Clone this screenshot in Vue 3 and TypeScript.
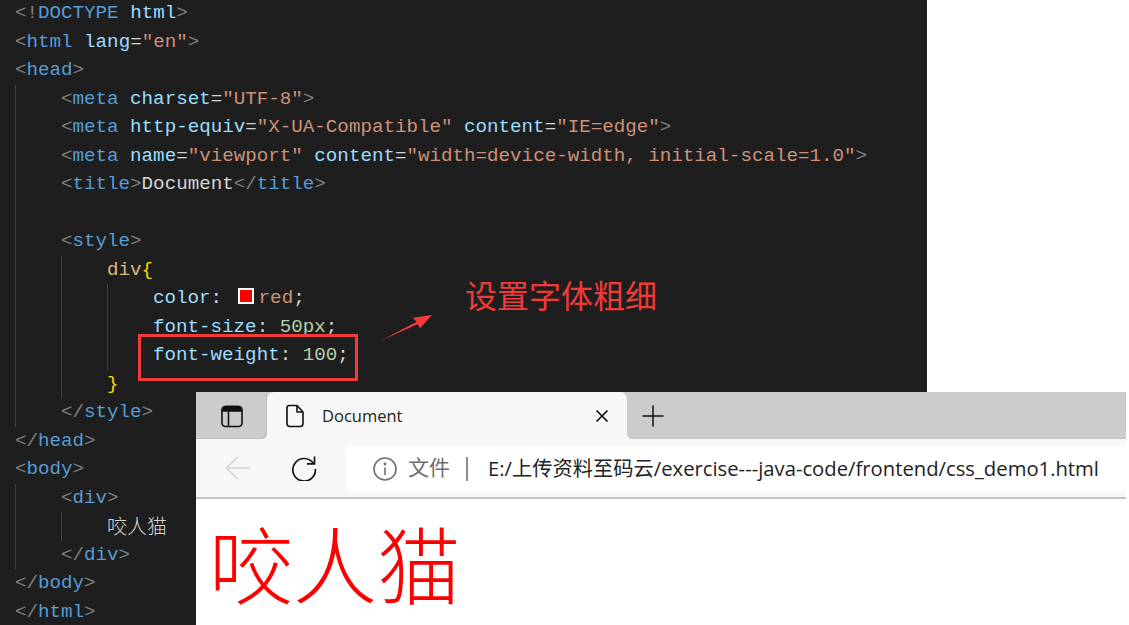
<script setup lang="ts">
const pageText: string = '咬人猫'
</script>

<template>
  <div class="shot">
    <div class="editor">
      <div class="line first"><i>&lt;!</i><b>DOCTYPE</b> <u>html</u><i>&gt;</i></div>
      <div class="line"><i>&lt;</i><b>html</b> <u>lang</u><em>=</em><s>"en"</s><i>&gt;</i></div>
      <div class="line"><i>&lt;</i><b>head</b><i>&gt;</i></div>
      <div class="block">
        <div class="line"><i>&lt;</i><b>meta</b> <u>charset</u><em>=</em><s>"UTF-8"</s><i>&gt;</i></div>
        <div class="line"><i>&lt;</i><b>meta</b> <u>http-equiv</u><em>=</em><s>"X-UA-Compatible"</s> <u>content</u><em>=</em><s>"IE=edge"</s><i>&gt;</i></div>
        <div class="line"><i>&lt;</i><b>meta</b> <u>name</u><em>=</em><s>"viewport"</s> <u>content</u><em>=</em><s>"width=device-width, initial-scale=1.0"</s><i>&gt;</i></div>
        <div class="line"><i>&lt;</i><b>title</b><i>&gt;</i><em>Document</em><i>&lt;/</i><b>title</b><i>&gt;</i></div>
        <div class="line">&nbsp;</div>
        <div class="line"><i>&lt;</i><b>style</b><i>&gt;</i></div>
        <div class="block">
          <div class="line"><span class="sel">div</span><span class="brace">{</span></div>
          <div class="block">
            <div class="line"><u>color</u><em>:</em> <span class="swatch"></span><s>red</s><em>;</em></div>
            <div class="line"><u>font-size</u><em>:</em> <span class="num">50px</span><em>;</em></div>
            <div class="line"><u>font-weight</u><em>:</em> <span class="num">100</span><em>;</em></div>
          </div>
          <div class="line"><span class="brace">}</span></div>
        </div>
        <div class="line"><i>&lt;/</i><b>style</b><i>&gt;</i></div>
      </div>
      <div class="line"><i>&lt;/</i><b>head</b><i>&gt;</i></div>
      <div class="line"><i>&lt;</i><b>body</b><i>&gt;</i></div>
      <div class="block">
        <div class="line"><i>&lt;</i><b>div</b><i>&gt;</i></div>
        <div class="block">
          <div class="line cn">咬人猫</div>
        </div>
        <div class="line"><i>&lt;/</i><b>div</b><i>&gt;</i></div>
      </div>
      <div class="line"><i>&lt;/</i><b>body</b><i>&gt;</i></div>
      <div class="line"><i>&lt;/</i><b>html</b><i>&gt;</i></div>
    </div>

    <div class="redbox"></div>
    <svg class="arrow" width="56" height="30" viewBox="0 0 56 30">
      <path d="M0.7 28.7 L36.7 9.7 L32.7 5.7 L52 3 L40 16.3 L37.5 12.3 Z" fill="#f23a3a" />
    </svg>
    <div class="note">设置字体粗细</div>

    <div class="browser">
      <div class="tabstrip">
        <div class="tabside">
          <svg width="24" height="24" viewBox="0 0 24 24" fill="none" stroke="#111" stroke-width="1.6">
            <rect x="2" y="2.5" width="20" height="20" rx="3.5" />
            <path d="M2.5 7 V5.5 a3 3 0 0 1 3-3 h13 a3 3 0 0 1 3 3 V7 Z" fill="#111" />
            <path d="M8.5 7 V22" />
          </svg>
        </div>
        <div class="tab">
          <svg class="docicon" width="20" height="24" viewBox="0 0 20 24" fill="none" stroke="#111" stroke-width="1.6" stroke-linejoin="round">
            <path d="M4 1.5 H12 L18 8 V19.5 a3 3 0 0 1-3 3 H5 a3 3 0 0 1-3-3 V4 a2.5 2.5 0 0 1 2-2.5 Z" />
            <path d="M12 1.5 V8 H18" />
          </svg>
          <span class="tabtitle">Document</span>
          <svg class="close" width="14" height="14" viewBox="0 0 14 14" stroke="#111" stroke-width="1.7">
            <path d="M1.5 1.5 L12.5 12.5 M12.5 1.5 L1.5 12.5" />
          </svg>
        </div>
        <div class="newtab">
          <svg width="22" height="22" viewBox="0 0 22 22" stroke="#111" stroke-width="1.5">
            <path d="M11 0.5 V21.5 M0.5 11 H21.5" />
          </svg>
        </div>
      </div>
      <div class="toolbar">
        <svg class="back" width="26" height="24" viewBox="0 0 26 24" fill="none" stroke="#d5d5d5" stroke-width="1.6">
          <path d="M1.5 12 H25.5 M12.5 1 L1.5 12 L12.5 23" />
        </svg>
        <svg class="reload" width="26" height="26" viewBox="0 0 26 26" fill="none" stroke="#111" stroke-width="1.7">
          <path d="M22.5 8.5 A11.3 11.3 0 1 0 24.4 14" />
          <path d="M23.5 1.5 V8.8 H16" />
        </svg>
        <div class="address">
          <svg width="24" height="24" viewBox="0 0 24 24" fill="none" stroke="#6e6e6e" stroke-width="1.6">
            <circle cx="12" cy="12" r="11" />
            <path d="M12 10.5 V18" />
            <circle cx="12" cy="7" r="0.6" fill="#6e6e6e" />
          </svg>
          <span class="scheme">文件</span>
          <span class="sep"></span>
          <span class="url">E:/上传资料至码云/exercise---java-code/frontend/css_demo1.html</span>
        </div>
      </div>
      <div class="page">{{ pageText }}</div>
    </div>
  </div>
</template>

<style scoped>
.shot {
  position: relative;
  width: 1129px;
  height: 625px;
  overflow: hidden;
  background: #fff;
}
.editor {
  width: 927px;
  height: 625px;
  box-sizing: border-box;
  padding-left: 15px;
  background: #1e1e1e;
  color: #d4d4d4;
  font-family: "Liberation Mono", monospace;
  font-size: 19.2px;
  overflow: hidden;
}
.line {
  height: 28.5px;
  line-height: 28.5px;
  white-space: pre;
}
.first {
  margin-top: -1px;
}
.block {
  padding-left: 46px;
  box-shadow: inset 1px 0 0 #404040;
}
.line i, .line b, .line u, .line em, .line s {
  font-style: normal;
  font-weight: normal;
  text-decoration: none;
}
.line i { color: #808080; }
.line b { color: #569cd6; }
.line u { color: #9cdcfe; }
.line em { color: #d4d4d4; }
.line s { color: #ce9178; }
.sel { color: #d7ba7d; }
.brace { color: #ffd700; }
.num { color: #b5cea8; }
.line.cn {
  color: #d4d4d4;
  font-family: "Noto Sans CJK SC", sans-serif;
  font-size: 20px;
  font-weight: 300;
  line-height: 27px;
}
.swatch {
  display: inline-block;
  box-sizing: border-box;
  width: 16px;
  height: 16px;
  margin: 0 5px 0 4px;
  background: #f00;
  border: 2px solid #fff;
  vertical-align: -1px;
}
.redbox {
  position: absolute;
  left: 138px;
  top: 334px;
  width: 220px;
  height: 47px;
  box-sizing: border-box;
  border: 3px solid #f23a3a;
}
.arrow {
  position: absolute;
  left: 380px;
  top: 312px;
}
.note {
  position: absolute;
  left: 465px;
  top: 273px;
  color: #f23a3a;
  font-family: "Noto Sans CJK SC", sans-serif;
  font-size: 32px;
  line-height: 42px;
}
.browser {
  position: absolute;
  left: 196px;
  top: 392px;
  width: 930px;
  height: 233px;
  display: flex;
  flex-direction: column;
  background: #fff;
  font-family: "Open Sans", "Noto Sans CJK SC", sans-serif;
}
.tabstrip {
  height: 47px;
  display: flex;
  background: linear-gradient(#cccccc 50%, #f4f4f4 50%);
}
.tabside {
  width: 71px;
  display: flex;
  align-items: center;
  justify-content: center;
  box-sizing: border-box;
  background: #cccccc;
  border-bottom-right-radius: 6px;
  box-shadow: inset -1px -1px 0 #bdbdbd;
}
.tab {
  width: 360px;
  display: flex;
  align-items: center;
  background: #f7f7f7;
  border-radius: 7px 7px 0 0;
  box-sizing: border-box;
  padding-left: 18px;
  color: #222;
}
.docicon { flex: none; }
.tabtitle {
  margin-left: 17px;
  font-size: 16.5px;
  font-family: "Open Sans", sans-serif;
}
.close {
  margin-left: auto;
  margin-right: 18px;
}
.newtab {
  flex: 1;
  display: flex;
  align-items: center;
  padding-left: 15px;
  background: #cccccc;
  border-bottom-left-radius: 6px;
  box-shadow: inset 0 -1px 0 #c2c2c2;
}
.toolbar {
  height: 58px;
  display: flex;
  align-items: center;
  box-sizing: content-box;
  background: #f7f7f7;
  border-bottom: 2px solid #c4c4c4;
}
.back { margin-left: 29px; }
.reload { margin-left: 40px; }
.address {
  margin-left: 29px;
  margin-top: 1px;
  flex: 1;
  height: 45px;
  display: flex;
  align-items: center;
  background: #fff;
  border-radius: 7px 0 0 7px;
  padding-left: 27px;
}
.scheme {
  margin-left: 11px;
  margin-bottom: 5px;
  color: #6e6e6e;
  font-size: 21px;
  font-family: "Noto Sans CJK SC", sans-serif;
}
.sep {
  width: 2px;
  height: 24px;
  margin-left: 16px;
  background: #8c8c8c;
}
.url {
  margin-left: 20px;
  margin-bottom: 2px;
  color: #222;
  font-size: 20.25px;
  white-space: nowrap;
  font-family: "Open Sans", "Noto Sans CJK SC", sans-serif;
}
.page {
  flex: 1;
  padding-left: 13px;
  color: #f00;
  font-family: "Noto Sans CJK SC", sans-serif;
  font-size: 84px;
  font-weight: 300;
  line-height: 126px;
  white-space: nowrap;
}
</style>
